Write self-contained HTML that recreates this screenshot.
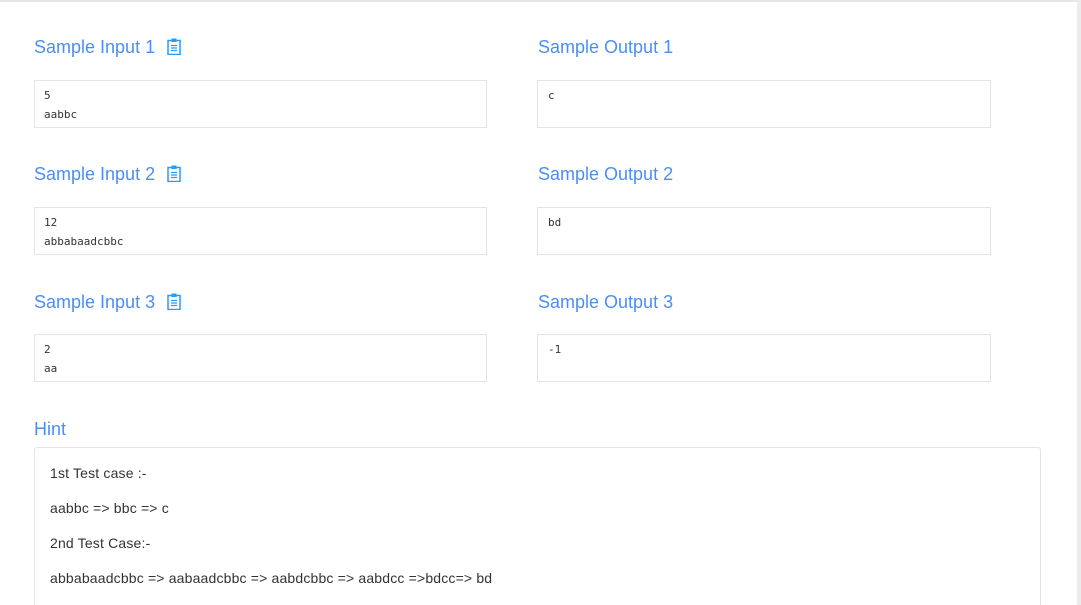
<!DOCTYPE html>
<html style="overflow:hidden"><head><style>
html,body{overflow:hidden}
body{margin:0;width:1081px;height:605px;background:#fff;font-family:"Liberation Sans",sans-serif;position:relative}
.top{position:absolute;left:0;top:0;width:1077px;height:2px;background:#e6e6e6}
.sb{position:absolute;right:0;top:0;width:4px;height:605px;background:#ececec}
h3{position:absolute;margin:0;font-weight:normal;font-size:18px;color:#4b8ff0;line-height:22px}
.box{position:absolute;border:1px solid #e4e4e4;box-sizing:border-box;width:453px;height:48px;padding:5px 9px;font-family:"DejaVu Sans Mono",monospace;font-size:11px;line-height:19px;color:#333;white-space:pre}
.out{width:454px;padding-left:10px}
.ic{display:inline-block;vertical-align:-2px;margin-left:12px}
.hint{position:absolute;left:34px;top:447px;width:1007px;height:170px;border:1px solid #e4e4e4;border-radius:3px;box-sizing:border-box;font-size:14px;color:#333;letter-spacing:0.17px}
.hint p{margin:0;position:absolute;left:15px}
</style></head><body>
<div class="top"></div><div class="sb"></div>
<svg width="0" height="0" style="position:absolute"><defs><symbol id="c" viewBox="0 0 14 17"><rect x="1" y="2.5" width="12" height="14" fill="none" stroke="#2a9bf4" stroke-width="1.5"/><rect x="4.5" y="0.5" width="5" height="3.5" fill="#2a9bf4"/><path d="M4 7.5h6M4 10h6M4 12.5h6" stroke="#2a9bf4" stroke-width="1.3"/></symbol></defs></svg>
<h3 style="left:34px;top:36px">Sample Input 1<svg class="ic" width="14" height="17"><use href="#c"/></svg></h3>
<h3 style="left:538px;top:36px">Sample Output 1</h3>
<div class="box" style="left:34px;top:80px">5
aabbc</div>
<div class="box out" style="left:537px;top:80px">c</div>
<h3 style="left:34px;top:163px">Sample Input 2<svg class="ic" width="14" height="17"><use href="#c"/></svg></h3>
<h3 style="left:538px;top:163px">Sample Output 2</h3>
<div class="box" style="left:34px;top:207px">12
abbabaadcbbc</div>
<div class="box out" style="left:537px;top:207px">bd</div>
<h3 style="left:34px;top:291px">Sample Input 3<svg class="ic" width="14" height="17"><use href="#c"/></svg></h3>
<h3 style="left:538px;top:291px">Sample Output 3</h3>
<div class="box" style="left:34px;top:334px">2
aa</div>
<div class="box out" style="left:537px;top:334px">-1</div>
<h3 style="left:34px;top:418px">Hint</h3>
<div class="hint">
<p style="top:17px">1st Test case :-</p>
<p style="top:52px">aabbc =&gt; bbc =&gt; c</p>
<p style="top:87px">2nd Test Case:-</p>
<p style="top:122px">abbabaadcbbc =&gt; aabaadcbbc =&gt; aabdcbbc =&gt; aabdcc =&gt;bdcc=&gt; bd</p>
</div>
</body></html>
